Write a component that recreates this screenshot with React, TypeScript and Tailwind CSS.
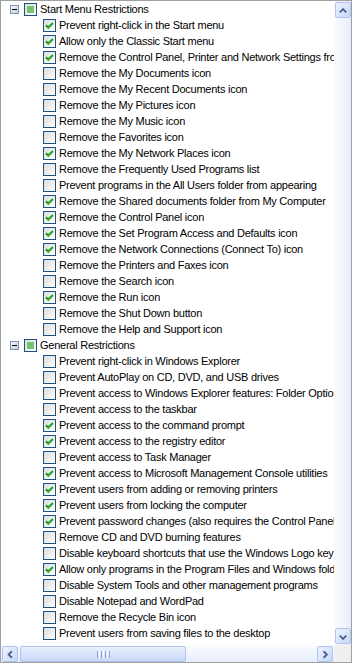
type Group = {
  title: string
  items: [string, boolean][]
}

const groups: Group[] = [
  {
    title: 'Start Menu Restrictions',
    items: [
      ['Prevent right-click in the Start menu', true],
      ['Allow only the Classic Start menu', true],
      ['Remove the Control Panel, Printer and Network Settings from the Start menu', true],
      ['Remove the My Documents icon', false],
      ['Remove the My Recent Documents icon', false],
      ['Remove the My Pictures icon', false],
      ['Remove the My Music icon', false],
      ['Remove the Favorites icon', false],
      ['Remove the My Network Places icon', true],
      ['Remove the Frequently Used Programs list', false],
      ['Prevent programs in the All Users folder from appearing', false],
      ['Remove the Shared documents folder from My Computer', true],
      ['Remove the Control Panel icon', true],
      ['Remove the Set Program Access and Defaults icon', true],
      ['Remove the Network Connections (Connect To) icon', true],
      ['Remove the Printers and Faxes icon', false],
      ['Remove the Search icon', false],
      ['Remove the Run icon', true],
      ['Remove the Shut Down button', false],
      ['Remove the Help and Support icon', false],
    ],
  },
  {
    title: 'General Restrictions',
    items: [
      ['Prevent right-click in Windows Explorer', false],
      ['Prevent AutoPlay on CD, DVD, and USB drives', false],
      ['Prevent access to Windows Explorer features: Folder Options', false],
      ['Prevent access to the taskbar', false],
      ['Prevent access to the command prompt', true],
      ['Prevent access to the registry editor', true],
      ['Prevent access to Task Manager', false],
      ['Prevent access to Microsoft Management Console utilities', true],
      ['Prevent users from adding or removing printers', true],
      ['Prevent users from locking the computer', true],
      ['Prevent password changes (also requires the Control Panel)', true],
      ['Remove CD and DVD burning features', false],
      ['Disable keyboard shortcuts that use the Windows Logo key', false],
      ['Allow only programs in the Program Files and Windows folder', true],
      ['Disable System Tools and other management programs', false],
      ['Disable Notepad and WordPad', false],
      ['Remove the Recycle Bin icon', false],
      ['Prevent users from saving files to the desktop', false],
    ],
  },
]

function CheckBox({ state }: { state: 'on' | 'off' | 'mixed' }) {
  return (
    <svg width="13" height="13" viewBox="0 0 13 13" className="shrink-0">
      <defs>
        <linearGradient id="cbfill" x1="0" y1="0" x2="1" y2="1">
          <stop offset="0" stopColor="#dcdcd7" />
          <stop offset="1" stopColor="#ffffff" />
        </linearGradient>
      </defs>
      <rect x="0.5" y="0.5" width="12" height="12" fill="url(#cbfill)" stroke="#1c5180" />
      {state === 'on' && (
        <path d="M3 6.2 L5.3 8.6 L10 3.9" fill="none" stroke="#21a121" strokeWidth="2.1" />
      )}
      {state === 'mixed' && <rect x="3" y="3" width="7" height="7" fill="#73c373" />}
    </svg>
  )
}

function Expander() {
  return (
    <svg width="9" height="9" viewBox="0 0 9 9" className="shrink-0">
      <defs>
        <linearGradient id="exfill" x1="0" y1="0" x2="1" y2="1">
          <stop offset="0" stopColor="#ffffff" />
          <stop offset="1" stopColor="#c6c5d7" />
        </linearGradient>
      </defs>
      <rect x="0.5" y="0.5" width="8" height="8" fill="url(#exfill)" stroke="#7898b5" />
      <rect x="2" y="4" width="5" height="1" fill="#000" />
    </svg>
  )
}

function Arrow({ dir }: { dir: 'up' | 'down' | 'left' | 'right' }) {
  const d = {
    up: 'M4 9.5 L7.5 6 L11 9.5',
    down: 'M4 6.5 L7.5 10 L11 6.5',
    left: 'M9.5 4 L6 7.5 L9.5 11',
    right: 'M6 4 L9.5 7.5 L6 11',
  }[dir]
  return (
    <svg width="15" height="15" viewBox="0 0 15 15">
      <path d={d} fill="none" stroke="#4d6185" strokeWidth="2" />
    </svg>
  )
}

function ScrollButton({ dir }: { dir: 'up' | 'down' | 'left' | 'right' }) {
  return (
    <div className="w-[16px] h-[16px] flex items-center justify-center rounded-[2px] border border-[#b3c4ec] bg-gradient-to-br from-[#eef3fe] to-[#c6d6fb]">
      <Arrow dir={dir} />
    </div>
  )
}

export default function App() {
  return (
    <div
      className="w-[352px] h-[663px] border border-[#a0a0a0] bg-white grid grid-cols-[1fr_17px] grid-rows-[1fr_17px] overflow-hidden"
      style={{ fontFamily: '"Liberation Sans", Arial, sans-serif' }}
    >
      <div className="overflow-hidden text-[11px] tracking-[-0.25px] text-black">
        {groups.map((g) => (
          <div key={g.title}>
            <div className="h-[16px] flex items-center whitespace-nowrap">
              <div className="w-[9px] ml-[9px] mr-[5px] flex">
                <Expander />
              </div>
              <CheckBox state="mixed" />
              <span className="ml-[3px] leading-[16px]">{g.title}</span>
            </div>
            {g.items.map(([label, on]) => (
              <div key={label} className="h-[16px] flex items-center whitespace-nowrap pl-[42px]">
                <CheckBox state={on ? 'on' : 'off'} />
                <span className="ml-[3px] leading-[16px]">{label}</span>
              </div>
            ))}
          </div>
        ))}
      </div>

      {/* vertical scrollbar */}
      <div className="flex flex-col justify-between bg-gradient-to-r from-[#fbfcfe] to-[#e6edfb] py-[1px] pl-[1px]">
        <ScrollButton dir="up" />
        <ScrollButton dir="down" />
      </div>

      {/* horizontal scrollbar */}
      <div className="flex items-center bg-gradient-to-b from-[#fbfcfe] to-[#e6edfb] pl-[1px] pr-[1px] pt-[1px]">
        <ScrollButton dir="left" />
        <div className="flex-1 h-[16px] flex pl-[2px] pr-[2px]">
          <div className="w-[166px] h-[16px] rounded-[2px] border border-[#b0c3ee] bg-gradient-to-b from-[#eaf0fd] to-[#c9d8f9] flex items-center justify-center gap-[1px]">
            <span className="w-[1px] h-[7px] bg-[#8fa6d6]" />
            <span className="w-[1px] h-[7px] bg-white" />
            <span className="w-[1px] h-[7px] bg-[#8fa6d6]" />
            <span className="w-[1px] h-[7px] bg-white" />
            <span className="w-[1px] h-[7px] bg-[#8fa6d6]" />
            <span className="w-[1px] h-[7px] bg-white" />
            <span className="w-[1px] h-[7px] bg-[#8fa6d6]" />
          </div>
        </div>
        <ScrollButton dir="right" />
      </div>

      <div className="bg-[#efefef]" />
    </div>
  )
}
